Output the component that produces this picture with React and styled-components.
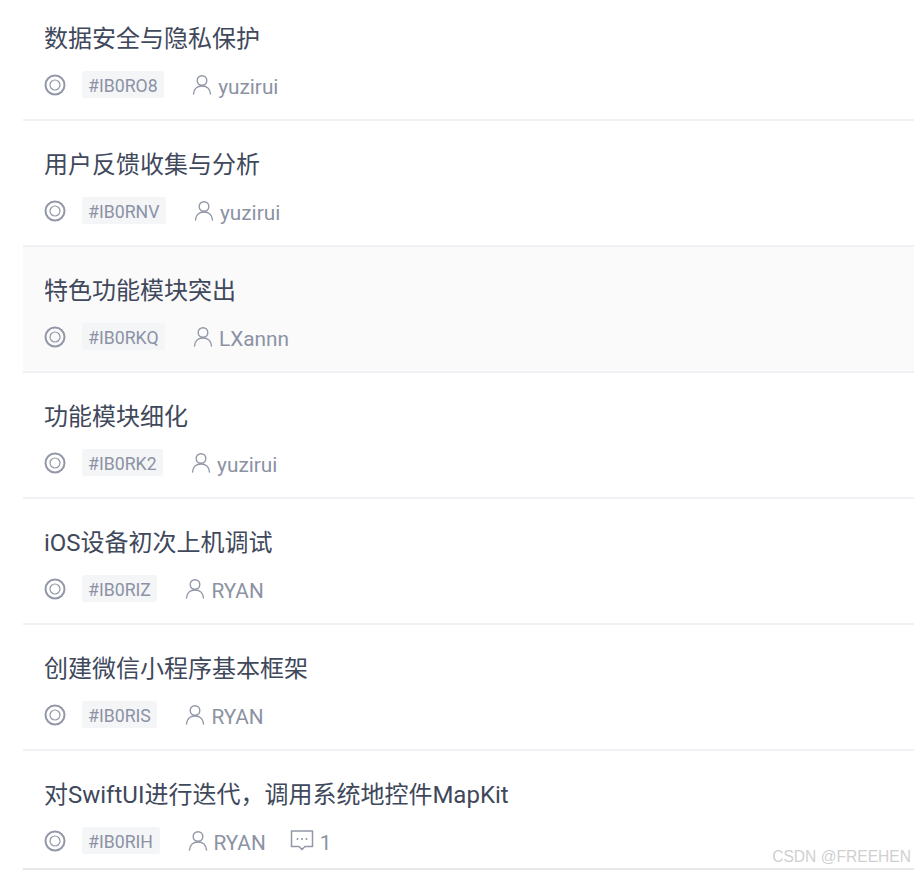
import React from 'react';
import styled, { createGlobalStyle } from 'styled-components';

const issues = [
  { title: '数据安全与隐私保护', id: '#IB0RO8', author: 'yuzirui' },
  { title: '用户反馈收集与分析', id: '#IB0RNV', author: 'yuzirui' },
  { title: '特色功能模块突出', id: '#IB0RKQ', author: 'LXannn', hover: true },
  { title: '功能模块细化', id: '#IB0RK2', author: 'yuzirui' },
  { title: 'iOS设备初次上机调试', id: '#IB0RIZ', author: 'RYAN' },
  { title: '创建微信小程序基本框架', id: '#IB0RIS', author: 'RYAN' },
  { title: '对SwiftUI进行迭代，调用系统地控件MapKit', id: '#IB0RIH', author: 'RYAN', comments: 1 }
];

const Global = createGlobalStyle`
  html, body {
    margin: 0;
    padding: 0;
    background: #fff;
    overflow: hidden;
  }
  body {
    font-family: Roboto, "Noto Sans CJK SC", sans-serif;
  }
`;

const Page = styled.div`
  position: relative;
  width: 914px;
  height: 872px;
  overflow: hidden;
`;

const List = styled.div`
  margin: -5px 0 0 23px;
`;

const Row = styled.div`
  box-sizing: border-box;
  height: 126px;
  padding: 23px 0 0 21px;
  border-bottom: 2px solid #f0f1f4;
  background: ${p => (p.$hover ? '#fafafb' : '#fff')};

  &:last-child {
    height: 119px;
    border-bottom-color: #e8e8ea;
  }
`;

const Title = styled.div`
  height: 40px;
  font-size: 24px;
  line-height: 42px;
  color: #40485b;
`;

const Meta = styled.div`
  display: flex;
  align-items: center;
  height: 30px;
  margin-top: 12px;
  color: #8c92a4;
`;

const StatusIcon = styled.svg`
  width: 22px;
  height: 22px;
  margin-right: 16px;
  flex: none;
`;

const IdTag = styled.span`
  box-sizing: border-box;
  height: 27px;
  margin-bottom: 2px;
  padding: 0 6.5px 0 6px;
  border-radius: 3px;
  background: #f4f5f7;
  font-size: 17.7px;
  line-height: 31px;
  color: #8c92a4;
`;

const Author = styled.span`
  display: flex;
  align-items: center;
  margin-left: 28px;
  padding-top: 4px;
  font-size: 20.8px;
  line-height: 34px;
`;

const PersonIcon = styled.svg`
  width: 20px;
  height: 22px;
  margin: -4px 6px 0 0;
`;

const Comments = styled.span`
  display: flex;
  align-items: center;
  margin-left: 24px;
  padding-top: 4px;
  font-size: 20.8px;
  line-height: 34px;
`;

const CommentIcon = styled.svg`
  width: 24px;
  height: 24px;
  margin: -6px 6px 0 0;
`;

const Watermark = styled.div`
  position: absolute;
  right: 3px;
  bottom: 5px;
  font-family: "Liberation Sans", sans-serif;
  font-size: 15.6px;
  line-height: 20px;
  color: #d0d0d0;
`;

const Status = () => (
  <StatusIcon viewBox="0 0 22 22" fill="none" stroke="#9297a8">
    <circle cx="11" cy="11" r="9.5" strokeWidth="2" />
    <circle cx="11" cy="11" r="5" strokeWidth="1.2" />
  </StatusIcon>
);

const Person = () => (
  <PersonIcon viewBox="0 0 20 22" fill="none" stroke="#9297a8" strokeWidth="1.4" strokeLinecap="round">
    <circle cx="10" cy="6.500" r="4.800" />
    <path d="M1.500 20c.4-5 3.800-8 8.500-8s8.100 3 8.500 8" />
  </PersonIcon>
);

const Comment = () => (
  <CommentIcon viewBox="0 0 24 24" fill="none" stroke="#9297a8" strokeWidth="1.500" strokeLinejoin="round">
    <path d="M1.500 3h21v15.500h-7.500l-3 3-3-3h-7.500z" />
    <circle cx="7.500" cy="11" r="1" fill="#8c92a4" stroke="none" />
    <circle cx="12" cy="11" r="1" fill="#8c92a4" stroke="none" />
    <circle cx="16.500" cy="11" r="1" fill="#8c92a4" stroke="none" />
  </CommentIcon>
);

export default function App() {
  return (
    <Page>
      <Global />
      <List>
        {issues.map(issue => (
          <Row key={issue.id} $hover={issue.hover}>
            <Title>{issue.title}</Title>
            <Meta>
              <Status />
              <IdTag>{issue.id}</IdTag>
              <Author>
                <Person />
                {issue.author}
              </Author>
              {issue.comments && (
                <Comments>
                  <Comment />
                  {issue.comments}
                </Comments>
              )}
            </Meta>
          </Row>
        ))}
      </List>
      <Watermark>CSDN @FREEHEN</Watermark>
    </Page>
  );
}
